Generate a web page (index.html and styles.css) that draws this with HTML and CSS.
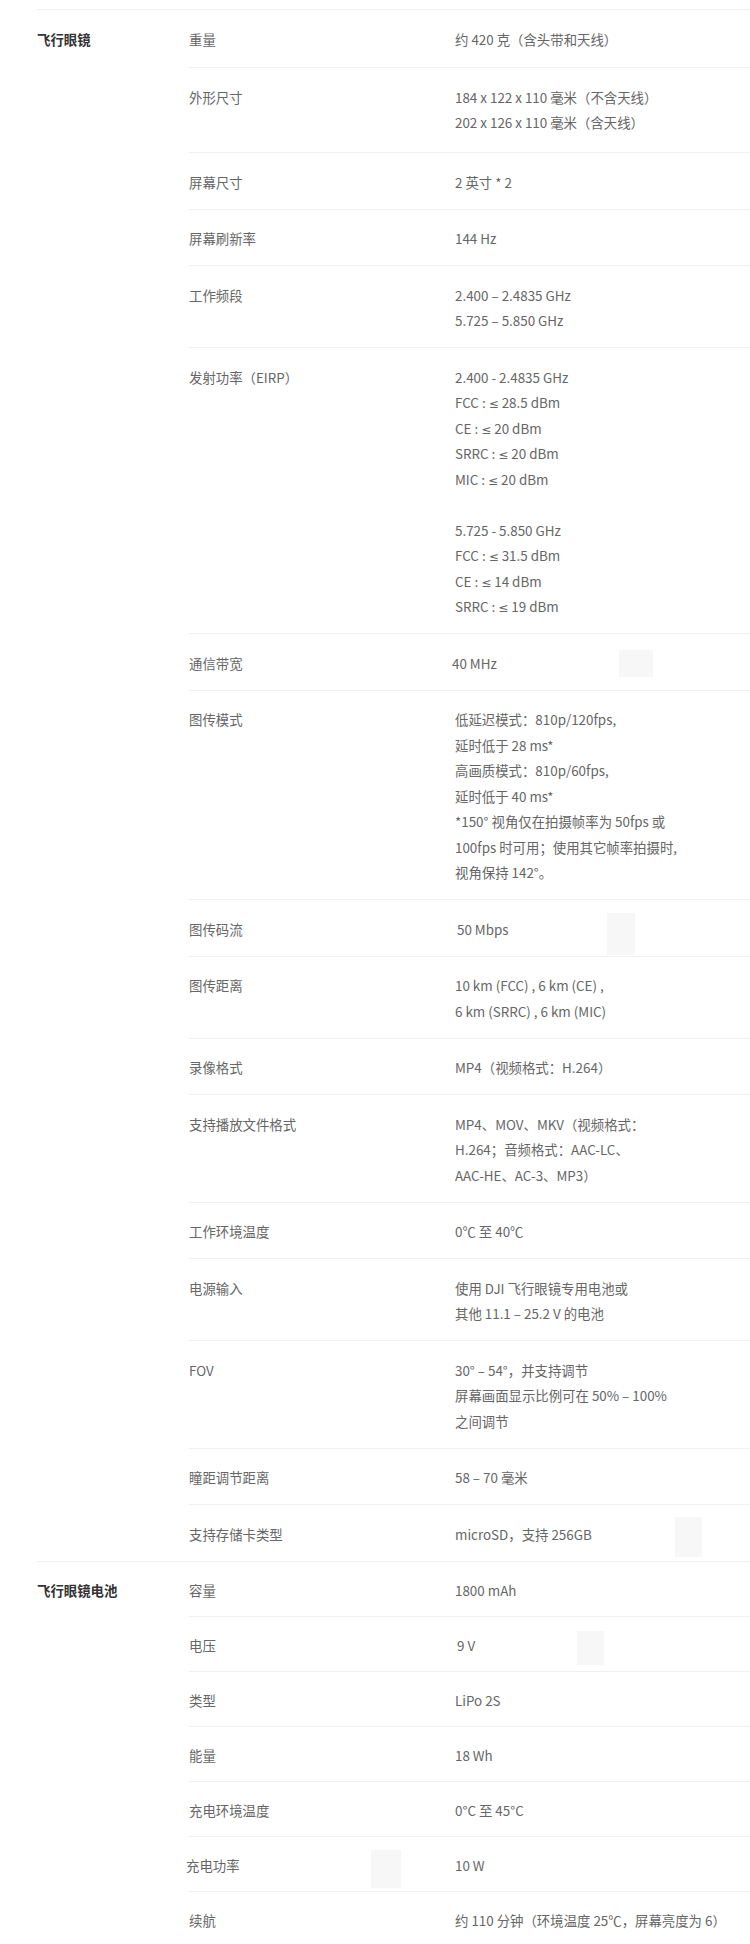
FILE: index.html
```html
<!DOCTYPE html>
<html lang="zh-CN">
<head>
    <meta charset="UTF-8">
    <meta name="viewport" content="width=device-width, initial-scale=1.0">
    <title>飞行眼镜 规格参数</title>
    <link rel="stylesheet" href="styles.css">
</head>
<body>
    <div class="specs">
        <!-- 飞行眼镜 -->
        <section class="group">
            <div class="group-title">飞行眼镜</div>
            <div class="group-rows">
                <div class="row"><div class="name">重量</div><div class="value">约 420 克（含头带和天线）</div></div>
                <div class="row"><div class="name">外形尺寸</div><div class="value">184 x 122 x 110 毫米（不含天线）<br>202 x 126 x 110 毫米（含天线）</div></div>
                <div class="row"><div class="name">屏幕尺寸</div><div class="value">2 英寸 * 2</div></div>
                <div class="row"><div class="name">屏幕刷新率</div><div class="value">144 Hz</div></div>
                <div class="row"><div class="name">工作频段</div><div class="value">2.400 – 2.4835 GHz<br>5.725 – 5.850 GHz</div></div>
                <div class="row"><div class="name">发射功率（EIRP）</div><div class="value">2.400 - 2.4835 GHz<br>FCC : <span class="sym">≤</span> 28.5 dBm<br>CE : <span class="sym">≤</span> 20 dBm<br>SRRC : <span class="sym">≤</span> 20 dBm<br>MIC : <span class="sym">≤</span> 20 dBm<br><br>5.725 - 5.850 GHz<br>FCC : <span class="sym">≤</span> 31.5 dBm<br>CE : <span class="sym">≤</span> 14 dBm<br>SRRC : <span class="sym">≤</span> 19 dBm</div></div>
                <div class="row">
                    <div class="name">通信带宽</div><div class="value nudge-left">40 MHz</div>
                    <span class="ghost ghost-band"></span>
                </div>
                <div class="row"><div class="name">图传模式</div><div class="value">低延迟模式：810p/120fps,<br>延时低于 28 ms*<br>高画质模式：810p/60fps,<br>延时低于 40 ms*<br>*150° 视角仅在拍摄帧率为 50fps 或<br>100fps 时可用；使用其它帧率拍摄时,<br>视角保持 142°。</div></div>
                <div class="row">
                    <div class="name">图传码流</div><div class="value nudge-right">50 Mbps</div>
                    <span class="ghost ghost-rate"></span>
                </div>
                <div class="row"><div class="name">图传距离</div><div class="value">10 km (FCC) , 6 km (CE) ,<br>6 km (SRRC) , 6 km (MIC)</div></div>
                <div class="row"><div class="name">录像格式</div><div class="value">MP4（视频格式：H.264）</div></div>
                <div class="row"><div class="name">支持播放文件格式</div><div class="value">MP4、MOV、MKV（视频格式：<br>H.264；音频格式：AAC-LC、<br>AAC-HE、AC-3、MP3）</div></div>
                <div class="row"><div class="name">工作环境温度</div><div class="value">0℃ 至 40℃</div></div>
                <div class="row"><div class="name">电源输入</div><div class="value">使用 DJI 飞行眼镜专用电池或<br>其他 11.1 – 25.2 V 的电池</div></div>
                <div class="row"><div class="name">FOV</div><div class="value">30° – 54°，并支持调节<br>屏幕画面显示比例可在 50% – 100%<br>之间调节</div></div>
                <div class="row"><div class="name">瞳距调节距离</div><div class="value">58 – 70 毫米</div></div>
                <div class="row">
                    <div class="name">支持存储卡类型</div><div class="value">microSD，支持 256GB</div>
                    <span class="ghost ghost-card"></span>
                </div>
            </div>
        </section>

        <!-- 飞行眼镜电池 -->
        <section class="group group-compact">
            <div class="group-title">飞行眼镜电池</div>
            <div class="group-rows">
                <div class="row"><div class="name">容量</div><div class="value">1800 mAh</div></div>
                <div class="row">
                    <div class="name">电压</div><div class="value nudge-right">9 V</div>
                    <span class="ghost ghost-volt"></span>
                </div>
                <div class="row"><div class="name">类型</div><div class="value">LiPo 2S</div></div>
                <div class="row"><div class="name">能量</div><div class="value">18 Wh</div></div>
                <div class="row"><div class="name">充电环境温度</div><div class="value">0°C 至 45°C</div></div>
                <div class="row">
                    <div class="name nudge-left">充电功率</div><div class="value">10 W</div>
                    <span class="ghost ghost-power"></span>
                </div>
                <div class="row"><div class="name">续航</div><div class="value">约 110 分钟（环境温度 25℃，屏幕亮度为 6）</div></div>
            </div>
        </section>
    </div>
</body>
</html>
```

FILE: styles.css
```css
* {
    margin: 0;
    padding: 0;
    box-sizing: border-box;
}

html, body {
    background: #fff;
    font-family: "Noto Sans CJK SC", "Noto Sans", sans-serif;
    font-size: 13.4px;
    line-height: 25.5px;
    color: #666;
}

.specs {
    padding: 9px 0 0 37px;
}

.group {
    display: grid;
    grid-template-columns: 152px 1fr;
    border-top: 1px solid #f0f0f0;
}

.group-title {
    padding-top: 16.5px;
    font-weight: 700;
    color: #333;
}

.row {
    position: relative;
    display: grid;
    grid-template-columns: 266px 1fr;
    padding: 16.5px 0 13.5px;
}

.group .row:first-child {
    padding-bottom: 15px;
}

.group .row:nth-child(2) {
    padding-bottom: 16.5px;
}

.group-compact .row,
.group-compact .row:first-child,
.group-compact .row:nth-child(2) {
    padding-bottom: 12px;
}

.row + .row {
    border-top: 1px solid #f0f0f0;
}

/* the narrow latin "less or equal" sign */
.sym {
    font-family: "Noto Sans", "DejaVu Sans", sans-serif;
    font-size: 12px;
    line-height: 1;
}

.nudge-left {
    margin-left: -3px;
}

.nudge-right {
    margin-left: 2px;
}

/* faint grey patches that sit over a few rows */
.ghost {
    position: absolute;
    background: #f7f7f7;
}

.ghost-band {
    top: 16px;
    left: 430px;
    width: 34px;
    height: 27px;
}

.ghost-rate {
    top: 13px;
    left: 418px;
    width: 28px;
    height: 42px;
}

.ghost-card {
    top: 12px;
    left: 486px;
    width: 27px;
    height: 40px;
}

.ghost-volt {
    top: 14px;
    left: 388px;
    width: 27px;
    height: 34px;
}

.ghost-power {
    top: 13px;
    left: 182px;
    width: 30px;
    height: 38px;
}
```
